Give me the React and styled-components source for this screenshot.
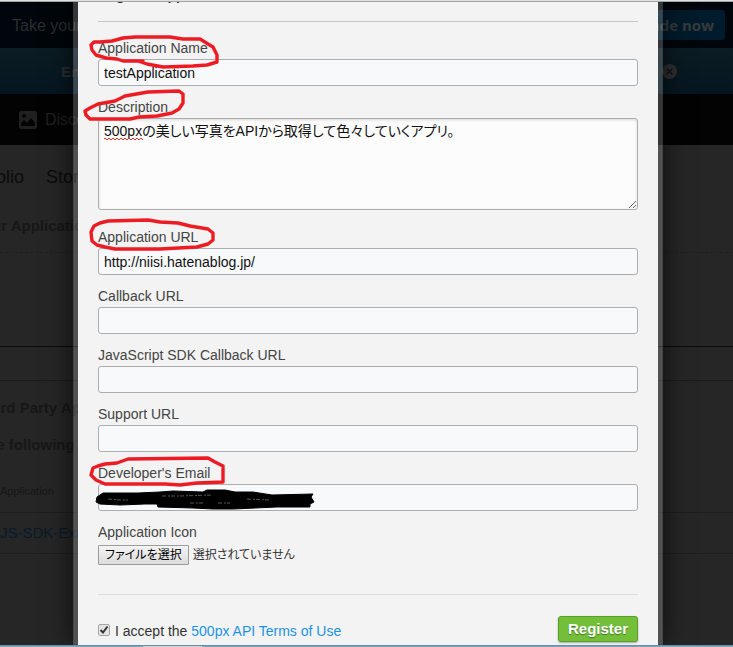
import { useRef, useState } from 'react';
import styled, { createGlobalStyle } from 'styled-components';

const GlobalStyle = createGlobalStyle`
  * {
    box-sizing: border-box;
  }

  body {
    margin: 0;
    background: #262626;
    font-family: "Liberation Sans", Arial, "Noto Sans CJK JP", sans-serif;
    font-size: 14px;
    font-feature-settings: "palt";
    line-height: 19px;
    color: #444;
  }
`;

const Frame = styled.div`
  display: grid;
  grid-template-rows: 2px minmax(0, 1fr) 2px;
  grid-template-columns: minmax(0, 1fr);
  height: 100vh;
  overflow: hidden;
`;

const TopEdge = styled.div`
  border-bottom: 1px solid #a3a5a4;
  background: #dfe1e0;
`;

const BottomEdge = styled.div`
  grid-row: 3;
  padding-left: 143px;
  border-top: 1px solid #6a8fa5;
  background: #78a6c0;
`;

const EdgeTab = styled.div`
  width: 59px;
  height: 1px;
  background: #c3d3dc;
`;

const Page = styled.div`
  grid-area: 2 / 1;
  overflow: hidden;
  white-space: nowrap;
  color: #171717;
`;

const PromoBar = styled.div`
  display: flex;
  justify-content: space-between;
  align-items: center;
  height: 46px;
  padding: 0 8px 0 12px;
  background: #00060b;
  color: #2b2e30;
  font-size: 16px;
`;

const UpgradeButton = styled.button`
  height: 30px;
  padding: 0 11px;
  border: 0;
  border-radius: 3px;
  background: #001b2b;
  color: #383b3d;
  font: bold 15px "Open Sans", sans-serif;
`;

const NoticeBar = styled.div`
  display: flex;
  justify-content: space-between;
  align-items: center;
  height: 46px;
  padding: 0 56px 0 61px;
  background: linear-gradient(#0b1c23, #061621);
  color: #2c2f31;
  font-size: 15px;
  font-weight: bold;
`;

const CloseButton = styled.button`
  display: flex;
  align-items: center;
  justify-content: center;
  width: 15px;
  height: 15px;
  padding: 0;
  border: 0;
  border-radius: 50%;
  background: #303030;
`;

const NavBar = styled.nav`
  display: flex;
  align-items: center;
  gap: 8px;
  height: 51px;
  padding-left: 19px;
  background: #030303;
  color: #202020;
  font-size: 16px;
`;

const Tabs = styled.div`
  display: flex;
  gap: 22px;
  height: 63px;
  padding-top: 23px;
  margin-left: -42px;
  color: #0b0b0b;
  font-size: 18px;
`;

const SectionHeading = styled.h2`
  height: 44px;
  margin: 0 0 0 -26px;
  padding-top: 8px;
  font-size: 15px;
  line-height: 19px;
`;

const EmptyPanel = styled.div`
  height: 95px;
  border-top: 1px dashed #202020;
  border-bottom: 1px solid #0b0b0b;
`;

const ThirdParty = styled.section`
  margin-top: 33px;
  padding-top: 17px;
  border-top: 1px solid #1c1c1c;
`;

const PartyHeading = styled.h2`
  margin: 0 0 18px -22px;
  font-size: 15px;
  line-height: 19px;
`;

const AppTable = styled.table`
  width: 100%;
  border-collapse: collapse;

  th {
    height: 40px;
    padding: 0;
    font-size: 11px;
    font-weight: normal;
    text-align: left;
  }

  td {
    height: 41px;
    padding: 0;
    border-top: 1px solid #1e1e1e;
    border-bottom: 1px solid #1e1e1e;
    font-size: 15px;
  }

  a {
    color: #071b2a;
    text-decoration: none;
  }
`;

const Overlay = styled.div`
  z-index: 1;
  grid-area: 2 / 1;
  display: flex;
  justify-content: center;
  padding-left: 3px;
  overflow: hidden;
`;

const Dialog = styled.form`
  width: 590px;
  padding: 0 20px;
  border: solid rgba(255, 255, 255, 0.2);
  border-width: 0 5px;
  background: #f3f3f3;
  background-clip: padding-box;
  box-shadow: 0 0 25px rgba(0, 0, 0, 0.7);
`;

const DialogTitle = styled.h1`
  margin: -15px 0 0;
  padding-bottom: 18px;
  border-bottom: 1px solid #c6c6c6;
  color: #333;
  font-size: 14px;
  line-height: 16px;
`;

const Fields = styled.div`
  padding: 16px 0 28px;
  border-bottom: 1px solid #dcdcdc;
`;

const Field = styled.div`
  position: relative;
  margin-bottom: 11px;
`;

const Label = styled.label`
  display: block;
  line-height: 21px;
`;

const TextInput = styled.input`
  display: block;
  width: 100%;
  height: 27px;
  padding: 0 5px;
  border: 1px solid #acadaf;
  border-radius: 3px;
  outline: 0;
  background: #f7f9fb;
  color: #111;
  font: inherit;
`;

const TextArea = styled.textarea`
  display: block;
  width: 100%;
  height: 92px;
  margin-bottom: 17px;
  padding: 3px 5px;
  border: 1px solid #acadaf;
  border-radius: 3px;
  outline: 0;
  background: #fcfcfc;
  box-shadow: inset 0 1px 3px rgba(0, 0, 0, 0.15);
  color: #111;
  font: inherit;
`;

const Mark = styled.svg`
  position: absolute;
  top: -14px;
  left: -18px;
  z-index: 1;
  overflow: visible;
  pointer-events: none;
`;

const FileRow = styled.div`
  display: flex;
  align-items: center;
  gap: 4px;
  height: 23px;
  color: #333;
  font-size: 12px;
`;

const FileInput = styled.input`
  display: none;
`;

const FileButton = styled.button`
  height: 20px;
  padding: 0 6px;
  border: 1px solid #9b9b9b;
  border-radius: 1px;
  background: linear-gradient(#f4f4f4, #dcdcdc);
  color: #000;
  font: inherit;
  line-height: 16px;
`;

const FileStatus = styled.span`
  padding-top: 2px;
`;

const Footer = styled.div`
  display: flex;
  justify-content: space-between;
  padding-top: 20px;
`;

const Terms = styled.label`
  display: flex;
  align-items: center;
  gap: 5px;
  height: 33px;
  color: #333;

  a {
    color: #1b93e3;
    text-decoration: none;
  }
`;

const Checkbox = styled.input`
  appearance: none;
  width: 12px;
  height: 12px;
  margin: 0 0 4px;
  border: 1px solid #a5a5a5;
  border-radius: 2px;
  background: linear-gradient(#eee, #ddd);

  &:checked {
    background: url("data:image/svg+xml,%3Csvg xmlns='http://www.w3.org/2000/svg' viewBox='0 0 10 10'%3E%3Cpath d='M1.5 5L4 7.5L8.5 1.5' fill='none' stroke='%23333' stroke-width='2'/%3E%3C/svg%3E")
      #e4e4e4;
  }
`;

const RegisterButton = styled.button`
  width: 80px;
  height: 26px;
  margin-top: 1px;
  padding: 0 0 2px;
  border: 1px solid #5a9f26;
  border-radius: 3px;
  background: #73bf3a;
  box-shadow: 0 1px 2px rgba(0, 0, 0, 0.3);
  color: #fff;
  font: bold 15px "Liberation Sans", Arial, sans-serif;
  text-shadow: 0 1px 1px rgba(0, 0, 0, 0.4);
`;

const circles = {
  name: 'M63 37L43 37L37 35L26 34L16 31L12 26L11 21L14 18L20 18L32 17L43 14L55 13L90 13L103 15L120 15L128 20L133 23L137 31L137 38L127 41L113 42L83 43L67 40L58 37',
  description:
    'M59 34L50 36L10 36L6 32L5 28L10 25L18 21L35 18L45 13L68 9L99 8L103 11L103 20L99 26L92 30L77 33Z',
  url: 'M20 10L28 8L68 7L80 9L98 10L110 13L128 16L133 20L133 27L128 31L117 34L80 36L35 36L25 34L17 32L12 28L11 19L14 13Z',
  email:
    'M18 17L25 15L37 14L48 10L128 9L135 13L143 17L143 33L117 34L100 36L85 35L25 35L16 31L11 26L13 19Z',
};

function Circle({ name }) {
  return (
    <Mark width="150" height="50" fill="none" aria-hidden="true">
      <path
        d={circles[name]}
        stroke="#ed1c24"
        strokeWidth="3.4"
        strokeLinecap="round"
        strokeLinejoin="round"
      />
    </Mark>
  );
}

function SpellingLine() {
  return (
    <Mark width="70" height="60" aria-hidden="true">
      <path
        d="M24 55.5H63M26 56.5H63"
        stroke="#e0332c"
        strokeWidth="1"
        strokeDasharray="2 2"
      />
    </Mark>
  );
}

function Scribble() {
  return (
    <Mark width="240" height="65" aria-hidden="true">
      <path
        d="M17 48L23 44L58 44L80 43L93 42L123 43L127 41L145 41L155 43L173 43L192 46L233 45L231 48L234 53L230 55L230 58L197 58L153 60L133 60L113 59L78 58L77 55L65 55L40 56L20 55L16 53Z"
        fill="#000"
        stroke="#000"
      />
      <path
        d="M28 50L40 51L48 51M82 47L100 47L131 46M110 54L123 54M138 54L150 54M167 50L190 51"
        fill="none"
        stroke="#555"
        strokeDasharray="4 2 2 1"
      />
    </Mark>
  );
}

function TextField({ id, label, circle, value = '', children }) {
  return (
    <Field>
      <Label htmlFor={id}>{label}</Label>
      <TextInput id={id} type="text" defaultValue={value} />
      {circle && <Circle name={circle} />}
      {children}
    </Field>
  );
}

export default function App() {
  const [accepted, setAccepted] = useState(true);
  const fileInput = useRef(null);

  return (
    <>
      <GlobalStyle />
      <Frame>
        <TopEdge />
        <Page>
          <PromoBar>
            <span>Take your</span>
            <UpgradeButton>Upgrade now</UpgradeButton>
          </PromoBar>
          <NoticeBar>
            <span>En</span>
            <CloseButton aria-label="Close">
              <svg width="7" height="7" stroke="#07151d" strokeWidth="1.4">
                <path d="M0.5 0.5L6.5 6.5M6.5 0.5L0.5 6.5" />
              </svg>
            </CloseButton>
          </NoticeBar>
          <NavBar>
            <svg width="18" height="18" viewBox="0 0 18 18" aria-hidden="true">
              <rect width="18" height="18" rx="2" fill="#202020" />
              <path d="M2 15V12L5 9L8 12L12 7L16 12V15Z" fill="#030303" />
              <circle cx="5" cy="5" r="2" fill="#030303" />
            </svg>
            <span>Discover</span>
          </NavBar>
          <Tabs>
            <span>Portfolio</span>
            <span>Stories</span>
          </Tabs>
          <SectionHeading>Your Applications</SectionHeading>
          <EmptyPanel />
          <ThirdParty>
            <PartyHeading>Third Party Applications</PartyHeading>
            <PartyHeading as="h3">The following</PartyHeading>
            <AppTable>
              <thead>
                <tr>
                  <th>Application</th>
                </tr>
              </thead>
              <tbody>
                <tr>
                  <td>
                    <a href="#example">JS-SDK-Example</a>
                  </td>
                </tr>
              </tbody>
            </AppTable>
          </ThirdParty>
        </Page>

        <Overlay>
          <Dialog onSubmit={(e) => e.preventDefault()}>
            <DialogTitle>Register Application</DialogTitle>
            <Fields>
              <TextField
                id="name"
                label="Application Name"
                value="testApplication"
                circle="name"
              />
              <Field>
                <Label htmlFor="description">Description</Label>
                <TextArea
                  id="description"
                  spellCheck={false}
                  defaultValue="500pxの美しい写真をAPIから取得して色々していくアプリ。"
                />
                <SpellingLine />
                <Circle name="description" />
              </Field>
              <TextField
                id="url"
                label="Application URL"
                value="http://niisi.hatenablog.jp/"
                circle="url"
              />
              <TextField id="callback" label="Callback URL" />
              <TextField id="sdk" label="JavaScript SDK Callback URL" />
              <TextField id="support" label="Support URL" />
              <TextField id="email" label="Developer's Email" circle="email">
                <Scribble />
              </TextField>
              <Label htmlFor="icon">Application Icon</Label>
              <FileRow>
                <FileInput id="icon" type="file" ref={fileInput} />
                <FileButton
                  type="button"
                  onClick={() => fileInput.current.click()}
                >
                  ファイルを選択
                </FileButton>
                <FileStatus>選択されていません</FileStatus>
              </FileRow>
            </Fields>
            <Footer>
              <Terms>
                <Checkbox
                  type="checkbox"
                  checked={accepted}
                  onChange={(e) => setAccepted(e.target.checked)}
                />
                <span>
                  I accept the <a href="#terms">500px API Terms of Use</a>
                </span>
              </Terms>
              <RegisterButton type="submit">Register</RegisterButton>
            </Footer>
          </Dialog>
        </Overlay>
        <BottomEdge>
          <EdgeTab />
        </BottomEdge>
      </Frame>
    </>
  );
}
